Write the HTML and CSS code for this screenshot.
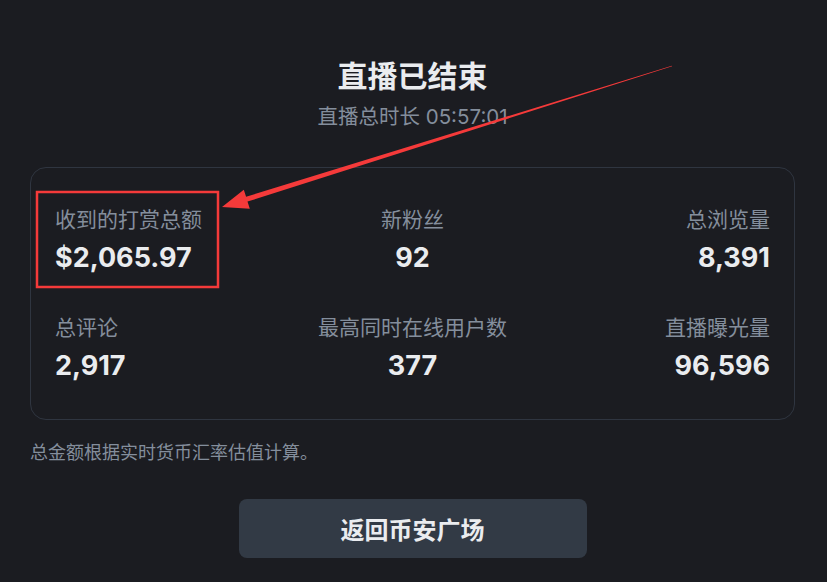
FILE: index.html
```html
<!DOCTYPE html>
<html lang="zh-CN">
<head>
<meta charset="UTF-8" />
<meta name="viewport" content="width=device-width, initial-scale=1" />
<title>直播已结束</title>
<link rel="stylesheet" href="styles.css">
</head>
<body>
  <div class="page">
    <h1 class="title">直播已结束</h1>
    <p class="duration">直播总时长 05:57:01</p>

    <div class="stats">
      <div class="stat">
        <div class="stat-label">收到的打赏总额</div>
        <div class="stat-value">$2,065.97</div>
      </div>
      <div class="stat">
        <div class="stat-label">新粉丝</div>
        <div class="stat-value">92</div>
      </div>
      <div class="stat">
        <div class="stat-label">总浏览量</div>
        <div class="stat-value">8,391</div>
      </div>
      <div class="stat">
        <div class="stat-label">总评论</div>
        <div class="stat-value">2,917</div>
      </div>
      <div class="stat">
        <div class="stat-label">最高同时在线用户数</div>
        <div class="stat-value">377</div>
      </div>
      <div class="stat">
        <div class="stat-label">直播曝光量</div>
        <div class="stat-value">96,596</div>
      </div>
    </div>

    <p class="note">总金额根据实时货币汇率估值计算。</p>

    <div class="actions">
      <button class="btn-back" type="button">返回币安广场</button>
    </div>
  </div>

  <!-- annotation drawn over the screenshot -->
  <svg class="markup" width="827" height="582" viewBox="0 0 827 582">
    <rect x="37" y="192" width="181" height="95" fill="none" stroke="#f53a3a" stroke-width="2.5" />
    <polygon fill="#f53a3a" points="672.1,66.3 247.5,201.6 249.8,208.7 222,207 243.8,189.7 246.1,196.8 671.9,65.7" />
  </svg>
</body>
</html>
```

FILE: styles.css
```css
html, body {
  margin: 0;
  padding: 0;
  background: #1b1c21;
}
body {
  font-family: Inter, "Noto Sans CJK SC", sans-serif;
  color: #eaecef;
  position: relative;
  min-height: 582px;
}
.page {
  width: 765px;
  margin-left: 30px;
  padding-top: 56px;
}
.title {
  margin: 0;
  text-align: center;
  font-size: 30px;
  line-height: 40px;
  font-weight: 700;
  color: #eaecef;
}
.duration {
  margin: 7px 0 0;
  text-align: center;
  font-size: 20.5px;
  line-height: 28px;
  color: #848e9c;
}
.stats {
  margin-top: 36px;
  border: 1px solid #2f3540;
  border-radius: 16px;
  padding: 38px 24px 35px;
  display: grid;
  grid-template-columns: 1fr 1fr 1fr;
  row-gap: 38px;
}
.stat:nth-child(3n+1) {
  text-align: left;
}
.stat:nth-child(3n+2) {
  text-align: center;
}
.stat:nth-child(3n) {
  text-align: right;
}
.stat-label {
  font-size: 21px;
  line-height: 28px;
  color: #848e9c;
}
.stat-value {
  margin-top: 6px;
  font-size: 27px;
  line-height: 36px;
  font-weight: 700;
  color: #eaecef;
}
.note {
  margin: 20px 0 0;
  font-size: 18px;
  line-height: 26px;
  color: #848e9c;
}
.actions {
  margin-top: 33px;
  display: flex;
  justify-content: center;
}
.btn-back {
  width: 348px;
  height: 59px;
  border: none;
  border-radius: 8px;
  background: #323a45;
  color: #eaecef;
  font-family: Inter, "Noto Sans CJK SC", sans-serif;
  font-size: 24px;
  font-weight: 700;
  cursor: pointer;
}
.markup {
  position: absolute;
  left: 0;
  top: 0;
  pointer-events: none;
}
```
